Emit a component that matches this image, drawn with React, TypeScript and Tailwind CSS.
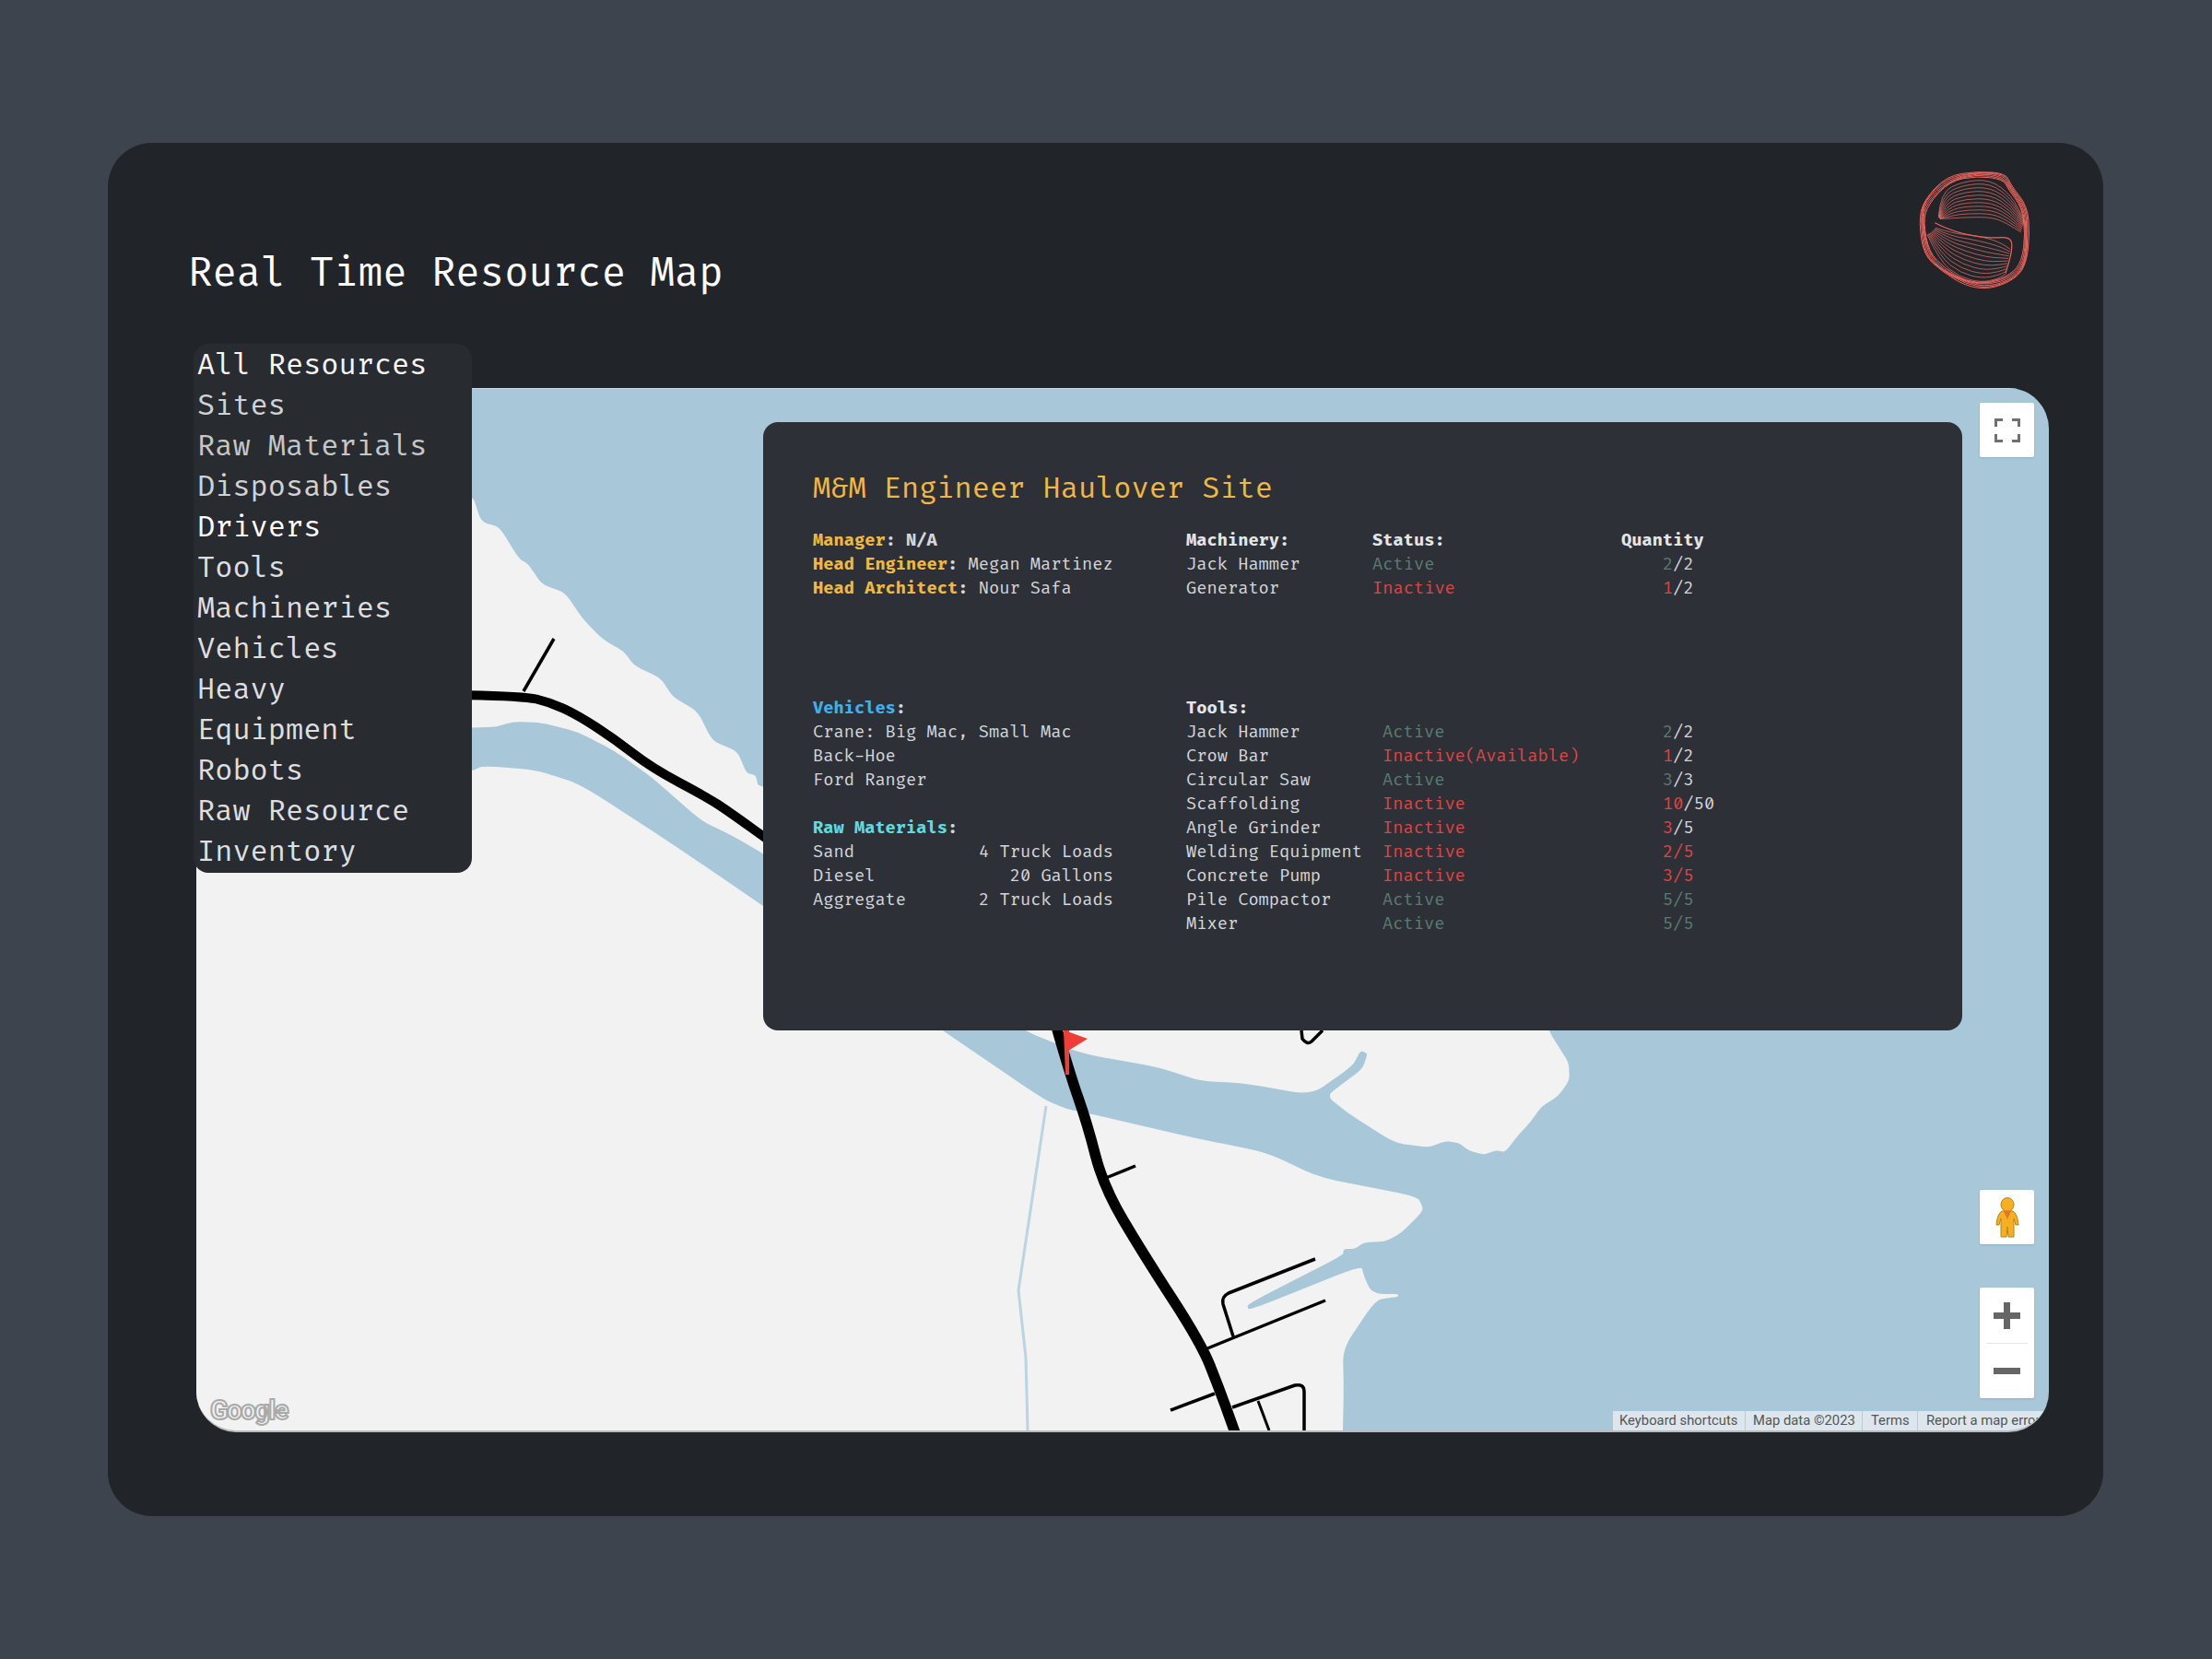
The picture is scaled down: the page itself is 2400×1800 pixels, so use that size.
const mono = "font-['Fira_Code','DejaVu_Sans_Mono','Liberation_Mono',monospace]";

const menuItems = [
  { label: "All Resources", color: "text-[#f5f5f5]" },
  { label: "Sites", color: "text-[#d0d2d4]" },
  { label: "Raw Materials", color: "text-[#c4c6c8]" },
  { label: "Disposables", color: "text-[#d0d2d4]" },
  { label: "Drivers", color: "text-[#ffffff]" },
  { label: "Tools", color: "text-[#dcdee0]" },
  { label: "Machineries", color: "text-[#dcdee0]" },
  { label: "Vehicles", color: "text-[#dcdee0]" },
  { label: "Heavy", color: "text-[#dcdee0]" },
  { label: "Equipment", color: "text-[#dcdee0]" },
  { label: "Robots", color: "text-[#dcdee0]" },
  { label: "Raw Resource", color: "text-[#dcdee0]" },
  { label: "Inventory", color: "text-[#dcdee0]" },
];

type Row = { name: string; active: boolean; status?: string; have: string; total: string; allRed?: boolean };

const machinery: Row[] = [
  { name: "Jack Hammer", active: true, have: "2", total: "2" },
  { name: "Generator", active: false, have: "1", total: "2" },
];

const tools: Row[] = [
  { name: "Jack Hammer", active: true, have: "2", total: "2" },
  { name: "Crow Bar", active: false, status: "Inactive(Available)", have: "1", total: "2" },
  { name: "Circular Saw", active: true, have: "3", total: "3" },
  { name: "Scaffolding", active: false, have: "10", total: "50" },
  { name: "Angle Grinder", active: false, have: "3", total: "5" },
  { name: "Welding Equipment", active: false, have: "2", total: "5", allRed: true },
  { name: "Concrete Pump", active: false, have: "3", total: "5", allRed: true },
  { name: "Pile Compactor", active: true, have: "5", total: "5", allRed: true },
  { name: "Mixer", active: true, have: "5", total: "5", allRed: true },
];

const materials = [
  { name: "Sand", amount: "4 Truck Loads" },
  { name: "Diesel", amount: "20 Gallons" },
  { name: "Aggregate", amount: "2 Truck Loads" },
];

const f = (v: number) => v.toFixed(1);

// open line rounded through the midpoints of its segments
function smooth(pts: number[][]) {
  const n = pts.length;
  let d = `M${f(pts[0][0])} ${f(pts[0][1])}`;
  for (let i = 1; i < n - 1; i++) {
    const mx = (pts[i][0] + pts[i + 1][0]) / 2;
    const my = (pts[i][1] + pts[i + 1][1]) / 2;
    d += ` Q${f(pts[i][0])} ${f(pts[i][1])} ${f(mx)} ${f(my)}`;
  }
  return d + ` L${f(pts[n - 1][0])} ${f(pts[n - 1][1])}`;
}

// closed outline with only its corners softened, r is the share of each side that gets rounded
function outline(pts: number[][], r: number) {
  const n = pts.length;
  let d = "";
  pts.forEach((p, i) => {
    const a = pts[(i + n - 1) % n];
    const b = pts[(i + 1) % n];
    const inX = p[0] + (a[0] - p[0]) * r;
    const inY = p[1] + (a[1] - p[1]) * r;
    const outX = p[0] + (b[0] - p[0]) * r;
    const outY = p[1] + (b[1] - p[1]) * r;
    d += `${i === 0 ? "M" : "L"}${f(inX)} ${f(inY)} Q${f(p[0])} ${f(p[1])} ${f(outX)} ${f(outY)} `;
  });
  return d + "Z";
}

// logo: outlines round the rim, then two ribbons of wavy lines above and below the hole
const rim = [
  [500, 135], [590, 145], [610, 185], [660, 250], [668, 340], [660, 440], [620, 490],
  [540, 520], [460, 510], [380, 465], [325, 410], [308, 300], [320, 235], [400, 155],
];
const rimCenter = [490, 325];
const topFrom = [[372, 285], [378, 205], [450, 172], [540, 165], [610, 215], [652, 300]];
const topTo = [[378, 292], [420, 292], [470, 286], [550, 286], [600, 312], [640, 336]];
const lowFrom = [[362, 322], [420, 338], [475, 346], [540, 358], [580, 372], [606, 392]];
const lowTo = [[335, 345], [375, 430], [440, 480], [510, 500], [565, 490], [590, 470]];

const toLogo = (p: number[]) => [(p[0] - 305) / 3, (p[1] - 135) / 3];
const blend = (a: number[][], b: number[][], t: number, seed: number) =>
  a.map((p, i) =>
    toLogo([
      p[0] + (b[i][0] - p[0]) * t,
      p[1] + (b[i][1] - p[1]) * t + Math.sin(i * 1.9 + seed) * 2,
    ]),
  );

const rimLines = Array.from({ length: 6 }, (_, i) =>
  outline(
    rim.map((p, k) =>
      toLogo([
        p[0] + (rimCenter[0] - p[0]) * (i * 0.018) + Math.sin(k * 2.3 + i) * 2.5,
        p[1] + (rimCenter[1] - p[1]) * (i * 0.018) + Math.cos(k * 1.7 + i) * 2.5,
      ]),
    ),
    0.5,
  ),
);
const topLines = Array.from({ length: 11 }, (_, i) => smooth(blend(topFrom, topTo, i / 10, i * 0.3)));
const lowLines = Array.from({ length: 11 }, (_, i) => smooth(blend(lowFrom, lowTo, i / 10, i * 0.4)));

function Logo() {
  return (
    <svg width="122" height="130" viewBox="0 0 122 130" fill="none" className="shrink-0">
      {rimLines.map((d, i) => (
        <path key={i} d={d} stroke="#f0635c" strokeWidth="1" />
      ))}
      {topLines.map((d, i) => (
        <path key={i} d={d} stroke="#ea756e" strokeWidth="0.7" />
      ))}
      {lowLines.map((d, i) => (
        <path key={i} d={d} stroke="#ea756e" strokeWidth="0.7" />
      ))}
      <path d={smooth([[360, 305], [420, 336], [540, 356], [608, 350], [612, 395], [590, 470]].map(toLogo))} stroke="#f0635c" strokeWidth="1.2" />
    </svg>
  );
}

const upperLand = [
  [100, 300], [512, 535], [522, 566], [542, 572], [563, 606], [573, 612], [588, 634], [613, 643], [632, 671],
  [653, 693], [677, 707], [688, 722], [717, 736], [730, 756], [757, 772], [773, 804], [800, 815], [810, 839],
  [820, 841], [823, 855], [1680, 1100], [1680, 1118], [1692, 1137], [1702, 1153], [1703, 1172], [1690, 1190],
  [1673, 1200], [1660, 1218], [1647, 1232], [1633, 1250], [1623, 1248], [1610, 1253], [1593, 1248], [1583, 1240],
  [1568, 1238], [1550, 1245], [1513, 1240], [1463, 1208], [1443, 1192], [1443, 1186], [1478, 1160], [1484, 1143],
  [1476, 1140], [1468, 1156], [1423, 1188], [1347, 1175], [1303, 1173], [1257, 1158], [1173, 1143], [1110, 1118],
  [1000, 1040], [828, 926], [793, 906], [760, 890], [707, 843], [667, 815], [627, 794], [587, 784], [557, 783],
  [533, 790], [100, 790],
];

const lowerLand = [
  [100, 837], [512, 837], [523, 831], [580, 835], [630, 851], [733, 918], [828, 983], [1040, 1130], [1133, 1193],
  [1157, 1203], [1180, 1208], [1307, 1237], [1373, 1250], [1433, 1278], [1538, 1298], [1545, 1313], [1520, 1338],
  [1503, 1347], [1480, 1348], [1470, 1355], [1458, 1355], [1457, 1362], [1353, 1415], [1355, 1422], [1477, 1373],
  [1480, 1385], [1487, 1400], [1497, 1404], [1517, 1404], [1517, 1407], [1493, 1410], [1457, 1463], [1458, 1513],
  [1453, 1700], [100, 1700],
];

const highwayWest = [
  [500, 754], [567, 755], [597, 762], [627, 776], [667, 802], [707, 833], [767, 865], [790, 880], [840, 916],
];
const highwaySouth = [
  [1145, 1110], [1160, 1163], [1180, 1220], [1197, 1287], [1240, 1360], [1303, 1457], [1323, 1507], [1342, 1560],
];

function MapArt() {
  return (
    <svg className="absolute inset-0 h-full w-full" viewBox="213 421 2010 1131" preserveAspectRatio="none">
      <path fill="#f2f2f2" d={outline(upperLand, 0.28)} />
      <path fill="#f2f2f2" d={outline(lowerLand, 0.28)} />
      {/* canal */}
      <path d="M1135 1200 L1105 1400 L1113 1473 L1115 1552" fill="none" stroke="#bcd3e1" strokeWidth="3" />
      {/* roads */}
      <g fill="none" stroke="#000" strokeLinecap="butt" strokeLinejoin="round">
        <path d={smooth(highwayWest)} strokeWidth="10" />
        <path d={smooth(highwaySouth)} strokeWidth="11.5" />
        <path d="M568 750 L601 693" strokeWidth="3.5" />
        <path d="M1200 1278 L1232 1265" strokeWidth="3.5" />
        <path d="M1310 1463 L1438 1411" strokeWidth="3.5" />
        <path d="M1338 1450 L1327 1415 Q1325 1407 1333 1403 L1427 1366" strokeWidth="3.5" />
        <path d="M1270 1530 L1318 1512" strokeWidth="3.5" />
        <path d="M1337 1527 L1405 1503 Q1415 1501 1415 1510 L1415 1552" strokeWidth="3.5" />
        <path d="M1365 1520 L1377 1552" strokeWidth="3" />
        <path d="M1412 1118 L1413 1127 Q1418 1134 1423 1130 L1435 1118" strokeWidth="3.5" />
      </g>
      {/* site flag */}
      <path d="M1154 1118 L1160 1118 L1160 1166 L1156 1166 Z" fill="#ef3e36" />
      <path d="M1155 1118 L1180 1127 L1159 1140 Z" fill="#ef3e36" />
      <rect x="213" y="421" width="2010" height="1" fill="#c4dbe6" />
    </svg>
  );
}

function Pegman() {
  return (
    <svg width="26" height="44" viewBox="0 0 26 44">
      <ellipse cx="13" cy="8" rx="7" ry="7.5" fill="#f5b021" stroke="#b5851d" strokeWidth="1" />
      <path
        d="M7 15 L19 15 Q24 18 25 30 L22 30 L20 23 L20 43 L14 43 L13 32 L12 43 L6 43 L6 23 L4 30 L1 30 Q2 18 7 15 Z"
        fill="#f5b021"
        stroke="#b5851d"
        strokeWidth="1"
      />
      <path d="M9 15 L17 15 L13 24 Z" fill="#e8722a" />
    </svg>
  );
}

function FullscreenIcon() {
  return (
    <svg width="28" height="26" viewBox="0 0 28 26" fill="none" stroke="#707070" strokeWidth="3">
      <path d="M1.5 9 V1.5 H9 M19 1.5 H26.5 V9 M26.5 17 V24.5 H19 M9 24.5 H1.5 V17" />
    </svg>
  );
}

function ToolTable({ rows, nameWidth, statusWidth }: { rows: Row[]; nameWidth: string; statusWidth: string }) {
  return (
    <div>
      {rows.map((row) => (
        <div key={row.name} className="flex">
          <div className={nameWidth}>{row.name}</div>
          <div className={`${statusWidth} ${row.active ? "text-[#5a7a72]" : "text-[#dc4545]"}`}>
            {row.status ?? (row.active ? "Active" : "Inactive")}
          </div>
          <div>
            <span className={row.active ? "text-[#5a7a72]" : "text-[#dc4545]"}>{row.have}</span>
            <span className={row.allRed ? (row.active ? "text-[#5a7a72]" : "text-[#dc4545]") : ""}>/{row.total}</span>
          </div>
        </div>
      ))}
    </div>
  );
}

function SitePanel() {
  return (
    <div className={`absolute left-[615px] top-[37px] h-[660px] w-[1301px] rounded-[16px] bg-[#2d3036] pl-[54px] pt-[52px] text-[18.25px] leading-[26px] text-[#d3d6da] ${mono}`}>
      <h2 className="text-[31.2px] leading-[42px] text-[#f0b840]">M&amp;M Engineer Haulover Site</h2>

      {/* people + machinery */}
      <div className="mt-[22px] flex h-[182px]">
        <div className="w-[405px]">
          <div className="font-bold"><span className="text-[#f0b840]">Manager</span>: N/A</div>
          <div><span className="font-bold text-[#f0b840]">Head Engineer</span><b>:</b> Megan Martinez</div>
          <div><span className="font-bold text-[#f0b840]">Head Architect</span><b>:</b> Nour Safa</div>
        </div>
        <div>
          <div className="flex font-bold text-[#e3e5e8]">
            <div className="w-[202px]">Machinery:</div>
            <div className="w-[270px]">Status:</div>
            <div>Quantity</div>
          </div>
          <ToolTable rows={machinery} nameWidth="w-[202px]" statusWidth="w-[315px]" />
        </div>
      </div>

      {/* vehicles + materials + tools */}
      <div className="flex">
        <div className="w-[405px]">
          <div className="font-bold"><span className="text-[#3fb0ec]">Vehicles</span>:</div>
          <div>Crane: Big Mac, Small Mac</div>
          <div>Back-Hoe</div>
          <div>Ford Ranger</div>
          <div className="mt-[26px] font-bold"><span className="text-[#5cdcdc]">Raw Materials</span>:</div>
          {materials.map((m) => (
            <div key={m.name} className="flex w-[326px] justify-between">
              <span>{m.name}</span>
              <span>{m.amount}</span>
            </div>
          ))}
        </div>
        <div>
          <div className="font-bold text-[#e3e5e8]">Tools:</div>
          <ToolTable rows={tools} nameWidth="w-[213px]" statusWidth="w-[304px]" />
        </div>
      </div>
    </div>
  );
}

export default function App() {
  return (
    <div className="h-[1800px] w-[2400px] bg-[#3d444d] pl-[117px] pt-[155px]">
      <div className="h-[1490px] w-[2165px] rounded-[48px] bg-[#212429]">
        {/* Header */}
        <div className="flex h-[266px] items-start justify-between pl-[87px] pr-[79px] pt-[30px]">
          <h1 className={`mt-[83px] text-[42.9px] leading-[58px] text-white ${mono}`}>Real Time Resource Map</h1>
          <Logo />
        </div>

        <div className="relative ml-[96px] w-[2010px]">
          {/* Map */}
          <div className="relative h-[1133px] overflow-hidden rounded-[44px] border-b-2 border-[#b9bdbf] bg-[#a8c8d9]">
            <MapArt />
            <SitePanel />

            {/* Google mark */}
            <div className="absolute bottom-[6px] left-[15px] font-['Roboto',sans-serif] text-[29px] font-bold leading-[32px] tracking-[-1.4px] text-[#f4f4f4] [-webkit-text-stroke:2px_#a9a9a9]">
              Google
            </div>

            {/* Attribution */}
            <div className="absolute bottom-0 right-0 flex h-[21px] w-[473px] bg-[#dce6ec] font-['Roboto',sans-serif] text-[14.8px] leading-[21px] text-[#555]">
              <div className="w-[144px] border-r border-[#bccad2] pl-[7px]">Keyboard shortcuts</div>
              <div className="w-[127px] border-r border-[#bccad2] pl-[8px]">Map data ©2023</div>
              <div className="w-[60px] border-r border-[#bccad2] pl-[9px]">Terms</div>
              <div className="whitespace-nowrap pl-[9px]">Report a map error</div>
            </div>

            {/* Map controls */}
            <div className="absolute bottom-[35px] right-[16px] top-[16px] flex w-[59px] flex-col justify-between">
              <div className="flex h-[59px] items-center justify-center rounded-[2px] bg-white shadow-sm">
                <FullscreenIcon />
              </div>
              <div className="flex flex-col gap-[47px]">
                <div className="flex h-[59px] items-center justify-center rounded-[2px] bg-white shadow-sm">
                  <Pegman />
                </div>
                <div className="flex h-[120px] flex-col rounded-[2px] bg-white shadow-sm">
                  <div className="flex h-[60px] items-center justify-center">
                    <div className="relative h-[29px] w-[29px]">
                      <div className="absolute left-0 top-[11px] h-[7px] w-[29px] bg-[#666]" />
                      <div className="absolute left-[11px] top-0 h-[29px] w-[7px] bg-[#666]" />
                    </div>
                  </div>
                  <div className="mx-[7px] h-px bg-[#e6e6e6]" />
                  <div className="flex flex-1 items-center justify-center">
                    <div className="h-[7px] w-[29px] bg-[#666]" />
                  </div>
                </div>
              </div>
            </div>
          </div>

          {/* Resource menu */}
          <div className={`absolute -left-[3px] -top-[48px] h-[574px] w-[302px] rounded-[16px] bg-[#282b30] pl-[4px] pt-[2px] text-[31.2px] leading-[44px] ${mono}`}>
            {menuItems.map((item) => (
              <div key={item.label} className={item.color}>{item.label}</div>
            ))}
          </div>
        </div>
      </div>
    </div>
  );
}
